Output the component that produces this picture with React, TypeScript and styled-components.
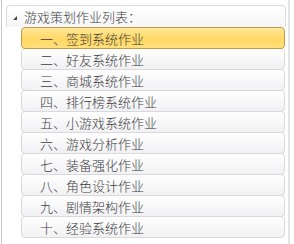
import React from "react";
import styled, { createGlobalStyle } from "styled-components";

const GlobalStyle = createGlobalStyle`
  html, body {
    margin: 0;
    padding: 0;
    background: #fff;
  }
  body {
    font-family: "Noto Sans CJK SC", "Noto Sans", sans-serif;
  }
`;

const Panel = styled.div`
  width: 289px;
  height: 244px;
  margin-left: 1px;
  box-sizing: border-box;
  border-left: 1px solid #c6c6c6;
  border-right: 2px solid #e4e4e4;
  padding: 5px 2px 0 4px;
  background: #fff;
`;

const Header = styled.div`
  height: 22px;
  display: flex;
  align-items: center;
  box-sizing: border-box;
  border: 1px solid #dcdcdc;
  border-bottom: none;
  border-radius: 4px 4px 0 0;
  background: linear-gradient(#ffffff, #f6f6f8);
  padding-left: 6px;
  font-size: 13px;
  font-weight: 300;
  color: #3c3c3c;
`;

const Arrow = styled.span`
  width: 0;
  height: 0;
  border-left: 4px solid transparent;
  border-bottom: 4px solid #444;
  margin: 2px 7px 0 0;
`;

const List = styled.div`
  display: flex;
  flex-direction: column;
  padding: 0 1px 0 15px;
`;

const Item = styled.div<{ $active?: boolean }>`
  height: 22px;
  margin-top: -1px;
  box-sizing: border-box;
  display: flex;
  align-items: center;
  padding-left: 18px;
  font-size: 13px;
  font-weight: 300;
  color: #3c3c3c;
  white-space: pre;
  border-radius: 4px;
  border: 1px solid ${(p) => (p.$active ? "#c29a4a" : "#d9d9dc")};
  background: ${(p) =>
    p.$active
      ? "linear-gradient(#ffe89a, #ffd865 55%, #ffe07a)"
      : "linear-gradient(#ffffff, #f1f1f4)"};
  position: relative;
  z-index: ${(p) => (p.$active ? 1 : 0)};
  &:first-child {
    margin-top: 0;
  }
`;

const items = [
  "一、签到系统作业",
  "二、好友系统作业",
  "三、商城系统作业",
  "四、排行榜系统作业",
  "五、小游戏系统作业",
  "六、游戏分析作业",
  "七、装备强化作业",
  "八、角色设计作业",
  "九、剧情架构作业",
  "十、经验系统作业",
];

export default function App() {
  return (
    <>
      <GlobalStyle />
      <Panel>
        <Header>
          <Arrow />
          游戏策划作业列表：
        </Header>
        <List>
          {items.map((t, i) => (
            <Item key={t} $active={i === 0}>
              {t}
            </Item>
          ))}
        </List>
      </Panel>
    </>
  );
}
